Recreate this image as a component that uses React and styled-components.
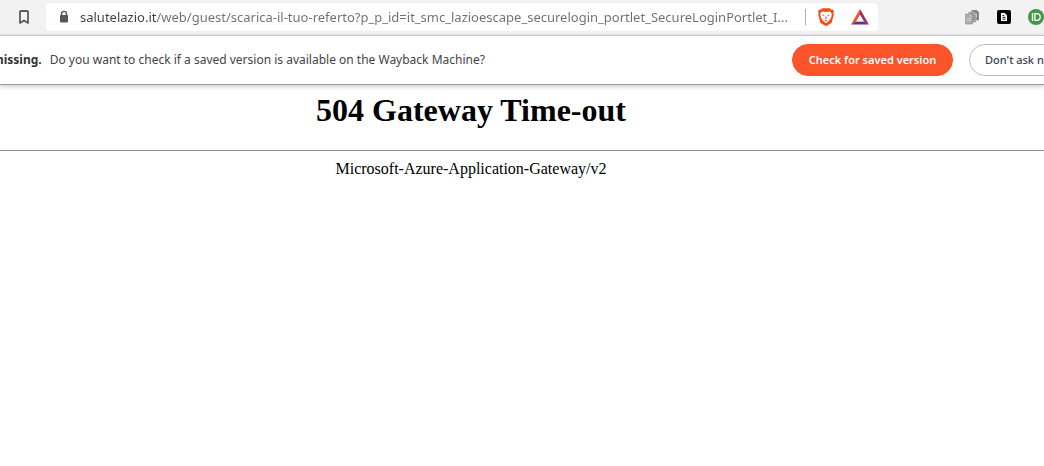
import React from 'react';
import styled, { createGlobalStyle } from 'styled-components';

const GlobalStyle = createGlobalStyle`
  *, *::before, *::after { box-sizing: border-box; }
  body {
    margin: 0;
    background: #fff;
    color: #000;
    font-family: "Liberation Serif", "Times New Roman", serif;
    overflow-x: hidden;
  }
`;

const uiFont = `"Segoe UI", "Noto Sans", "Open Sans", sans-serif`;

const Toolbar = styled.header`
  display: flex;
  align-items: flex-start;
  height: 36px;
  padding: 3px 0 0 16px;
  background: #f2f2f2;
  border-bottom: 1px solid #d2d3d5;
  overflow: hidden;
`;

const IconButton = styled.button`
  display: flex;
  flex: none;
  align-items: center;
  justify-content: center;
  width: ${(p) => p.$width || 16}px;
  height: 28px;
  padding: 0;
  border: 0;
  background: none;
`;

const AddressBar = styled.div`
  display: flex;
  flex: 1;
  align-items: center;
  min-width: 0;
  height: 28px;
  margin-left: 14px;
  padding: 0 8px 0 12px;
  border-radius: 4px;
  background: #fff;
`;

const AddressInput = styled.input`
  flex: 1;
  min-width: 0;
  height: 28px;
  margin-left: 10px;
  padding: 0;
  border: 0;
  outline: 0;
  font: 13px/28px ${uiFont};
  color: transparent;
  background: linear-gradient(90deg, #3c3e42 76px, #6c6f74 76px);
  background-clip: text;
  -webkit-background-clip: text;
`;

const Divider = styled.span`
  flex: none;
  width: 1px;
  height: 16px;
  margin: 0 10px 0 8px;
  background: #aeb0b3;
`;

const Shields = styled.div`
  display: flex;
  flex: none;
  gap: 14px;
`;

const Extensions = styled.nav`
  display: flex;
  flex: none;
  gap: 16px;
  width: 166px;
  padding-left: 86px;
`;

const Notice = styled.section`
  display: flex;
  align-items: center;
  justify-content: space-between;
  height: 49px;
  border-bottom: 1px solid #9b9b9b;
  box-shadow: 0 1px 5px rgba(0, 0, 0, 0.25);
  overflow: hidden;
  font-family: ${uiFont};
  color: #444;
`;

const NoticeText = styled.p`
  display: flex;
  gap: 8px;
  margin: 0 0 0 -8px;
  font-size: 12px;
  line-height: 20px;
  white-space: nowrap;
`;

const Lead = styled.strong`
  color: #333;
`;

const NoticeActions = styled.div`
  display: flex;
  flex: none;
  gap: 16px;
  width: 252px;
`;

const Pill = styled.button`
  flex: none;
  width: ${(p) => (p.$primary ? 161 : 132)}px;
  height: 32px;
  padding: 0 15px;
  border: 1px solid ${(p) => (p.$primary ? '#fb542b' : '#b9bcc8')};
  border-radius: 16px;
  background: ${(p) => (p.$primary ? '#fb542b' : '#fff')};
  color: ${(p) => (p.$primary ? '#fff' : '#3b3e4f')};
  font: ${(p) => (p.$primary ? 600 : 500)} 11px/20px ${uiFont};
  text-align: ${(p) => (p.$primary ? 'center' : 'left')};
  white-space: nowrap;
`;

const Page = styled.main`
  text-align: center;
`;

const Title = styled.h1`
  margin: 0;
  padding: 7px 102px 21px 0;
  font-size: 32px;
  line-height: 37px;
`;

const Rule = styled.hr`
  height: 1px;
  margin: 0;
  border: 0;
  background: #8f8f8f;
`;

const Server = styled.p`
  margin: 0;
  padding: 9px 102px 0 0;
  font-size: 16px;
  line-height: 18px;
`;

const Bookmark = () => (
  <svg width="12" height="16" viewBox="0 0 12 16" aria-hidden="true">
    <path d="M2.800 2h6.400q.8 0 .8.8V14L6 11.400 2 14V2.800Q2 2 2.800 2Z" fill="none" stroke="#5b5d61" strokeWidth="1.8" strokeLinejoin="round" />
  </svg>
);

const Lock = () => (
  <svg width="12" height="14" viewBox="0 0 12 14" aria-hidden="true">
    <path d="M3.500 6V3.900a2.500 2.500 0 0 1 5 0V6" fill="none" stroke="#55585d" strokeWidth="1.4" />
    <rect x="2" y="5" width="8" height="7.5" rx="1" fill="#55585d" />
  </svg>
);

const BraveLion = () => (
  <svg width="18" height="20" viewBox="0 0 18 20" aria-hidden="true">
    <path d="M5.200 1.200h7.600l1.500 1.500 1.500-.1 1.200 2-.6 1.500.4 1.600-2 7.300q-.3 1-1.200 1.600L9 19.200l-4.600-2.600q-.9-.6-1.200-1.600L1.200 7.700l.4-1.600L1 4.600l1.200-2 1.500.1Z" fill="#ee4f16" />
    <path d="M5 4.400 9 5l4-.6 1.800 2.400-.5 3.200-1.800 3.200L9 16.200l-3.500-3L3.700 10l-.5-3.200Z" fill="#fff" />
    <path d="m5.300 7.500 2.200.5-.3.900-1.200-.2Zm7.400 0-2.200.5.3.9 1.200-.2ZM8.600 9h.8v1.800l.8.600L9 12.100l-1.200-.7.8-.6ZM7.400 13.600 9 13l1.600.6-1.600.9Z" fill="#f0541e" />
  </svg>
);

const BatTriangle = () => (
  <svg width="20" height="18" viewBox="0 0 20 18" aria-hidden="true">
    <path d="M10 1 1 16.500l5.600-3.200L10 7.300Z" fill="#f4502a" />
    <path d="m10 1 9 15.500-5.600-3.200L10 7.300Z" fill="#9e2f63" />
    <path d="M1 16.500h18l-5.600-3.200H6.600Z" fill="#662d91" />
    <path d="m10 6.700 4 6.800H6Z" fill="#fff" />
  </svg>
);

const Pages = () => (
  <svg width="16" height="16" viewBox="0 0 16 16" aria-hidden="true">
    <path d="M7.500 1h5.300L15 3.200v8H7.500Z" fill="#858585" />
    <path d="M4.500 3h5.300L12 5.200v8H4.500Z" fill="#979797" stroke="#c6c6c6" strokeWidth=".6" />
    <path d="M1.500 5h4.800l2.200 2.200V15h-7Z" fill="#acacac" stroke="#8f8f8f" strokeWidth=".6" />
    <path d="M6.300 5v2.200h2.200M3 9.500h4M3 11.500h4M10 5.200h2M12.500 5v3" fill="none" stroke="#d7d7d7" strokeWidth=".8" />
  </svg>
);

const DocTile = () => (
  <svg width="16" height="16" viewBox="0 0 16 16" aria-hidden="true">
    <rect x="1" y="1" width="14" height="14" rx="2" fill="#000" />
    <path d="M5 4h3.800L11 6.200V12H5Z" fill="#fff" />
    <path d="M6.500 6.500h1.500M6.500 8.300h3M6.500 10.200h3" stroke="#000" strokeWidth=".9" />
  </svg>
);

const GreenBadge = () => (
  <svg width="16" height="16" viewBox="0 0 16 16" aria-hidden="true">
    <circle cx="8" cy="8" r="8" fill="#3f9a48" />
    <path d="M4.500 4v8" stroke="#fff" strokeWidth="1.400" />
    <path d="M6.900 4.600H8.800a3.400 3.400 0 0 1 0 6.800H6.900Z" fill="none" stroke="#fff" strokeWidth="1.300" />
  </svg>
);

export default function App() {
  return (
    <>
      <GlobalStyle />
      <Toolbar>
        <IconButton aria-label="Bookmark this page"><Bookmark /></IconButton>
        <AddressBar>
          <Lock />
          <AddressInput
            aria-label="Address"
            readOnly
            value="salutelazio.it/web/guest/scarica-il-tuo-referto?p_p_id=it_smc_lazioescape_securelogin_portlet_SecureLoginPortlet_I..."
          />
          <Divider />
          <Shields>
            <IconButton $width={20} aria-label="Brave Shields"><BraveLion /></IconButton>
            <IconButton $width={20} aria-label="Brave Rewards"><BatTriangle /></IconButton>
          </Shields>
        </AddressBar>
        <Extensions aria-label="Extensions">
          <IconButton aria-label="Copy pages"><Pages /></IconButton>
          <IconButton aria-label="Documents"><DocTile /></IconButton>
          <IconButton aria-label="Pushbullet"><GreenBadge /></IconButton>
        </Extensions>
      </Toolbar>
      <Notice>
        <NoticeText>
          <Lead>missing.</Lead>
          <span>Do you want to check if a saved version is available on the Wayback Machine?</span>
        </NoticeText>
        <NoticeActions>
          <Pill $primary>Check for saved version</Pill>
          <Pill>Don't ask now</Pill>
        </NoticeActions>
      </Notice>
      <Page>
        <Title>504 Gateway Time-out</Title>
        <Rule />
        <Server>Microsoft-Azure-Application-Gateway/v2</Server>
      </Page>
    </>
  );
}
